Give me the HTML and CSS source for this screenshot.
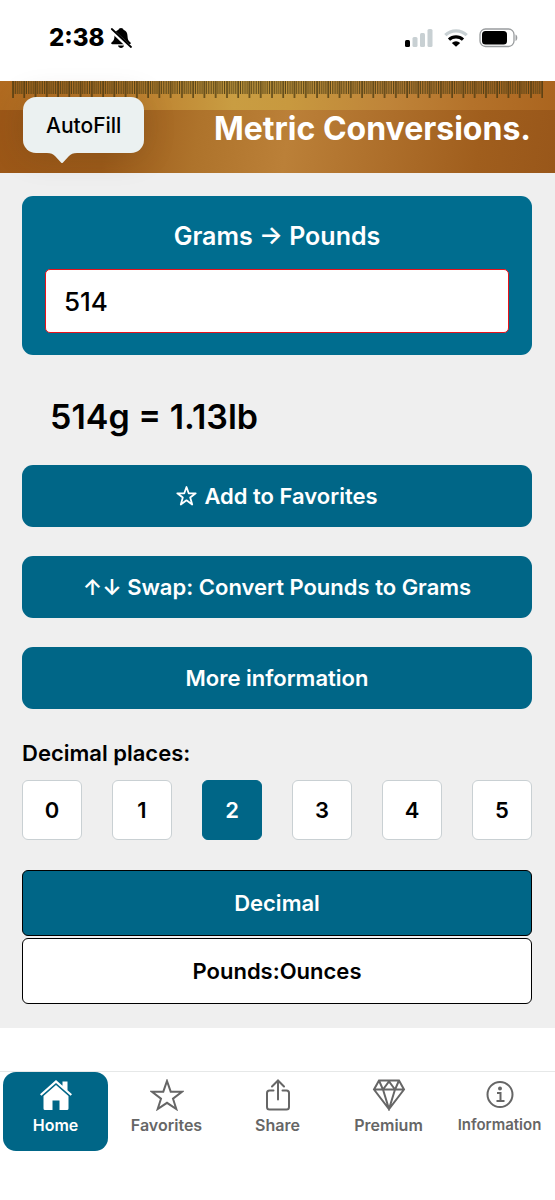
FILE: index.html
```
<!DOCTYPE html>
<html lang="en">
<head>
<meta charset="utf-8">
<meta name="viewport" content="width=device-width, initial-scale=1">
<title>Metric Conversions</title>
<link rel="stylesheet" href="styles.css">
</head>
<body>
<div class="status">
  <div class="status-group">
    <span class="clock">2:38</span>
    <svg class="bell" width="22" height="22" viewBox="0 0 22 22" aria-hidden="true">
      <path d="M11 1c-1.300 0-2.300.8-2.500 1.800C5.800 3.800 4.600 6 4.500 9c-.1 3.500-1 4.800-2.800 6.300-.9.900-.6 2 .7 2h17.200c1.300 0 1.600-1.100.7-2-1.800-1.500-2.700-2.800-2.800-6.300-.1-3-1.300-5.200-4-6.200C13.300 1.800 12.300 1 11 1Z"/>
      <path d="M8 18.500h6c-.3 1.600-1.500 2.500-3 2.500s-2.700-.9-3-2.500Z"/>
      <path d="M1 2.800 20.200 21" stroke="#fff" stroke-width="4"/>
      <path d="M1.800 2 21 20" stroke="#000" stroke-width="1.800" stroke-linecap="round"/>
    </svg>
  </div>
  <div class="status-group status-icons">
    <svg width="28" height="18" viewBox="0 0 28 18" aria-hidden="true">
      <rect x="0" y="11" width="5" height="7" rx="1.500"/>
      <g fill="#c8d0d3"><rect x="7.500" y="8" width="5" height="10" rx="1.500"/><rect x="15" y="4" width="5" height="14" rx="1.500"/><rect x="22.500" y="0" width="5" height="18" rx="1.500"/></g>
    </svg>
    <svg width="24" height="18" viewBox="0 0 24 18" fill="none" stroke-width="3.200" aria-hidden="true">
      <path d="M1.300 6.200a15.500 15.500 0 0 1 21.400 0" stroke="#c8d0d3"/>
      <path d="M5 10.600a10.200 10.200 0 0 1 14 0" stroke="#000"/>
      <path d="M12 17.800 7.800 14a6.200 6.200 0 0 1 8.400 0Z" fill="#000" stroke="none"/>
    </svg>
    <svg width="39" height="20" viewBox="0 0 39 20" aria-hidden="true">
      <rect x="1" y="1" width="34" height="17.500" rx="5.500" fill="none" stroke="#999c9e" stroke-width="1.300"/>
      <rect x="3" y="3" width="25" height="13.500" rx="3.500"/>
      <path d="M36.500 6.500c2.400 1 2.400 5.500 0 6.500Z" fill="#999c9e"/>
    </svg>
  </div>
</div>

<header class="banner">
  <svg class="ruler" width="100%" height="17" aria-hidden="true">
    <defs>
      <pattern id="ticks" width="11.260" height="17" patternUnits="userSpaceOnUse">
        <path d="M1 0v17" stroke="#43350f" stroke-width="1.300"/>
        <path d="M3.200 0v13M5.450 0v13M7.700 0v13M9.950 0v13" stroke="#4f3f14" stroke-width="1"/>
      </pattern>
    </defs>
    <rect width="100%" height="17" fill="url(#ticks)"/>
  </svg>
  <h1 class="brand">Metric Conversions.</h1>
  <button class="autofill" type="button">AutoFill
    <svg class="pointer" width="30" height="12" viewBox="0 0 30 12" aria-hidden="true"><path d="M0 0h30c-4 0-6 1-8 3l-6 6.500q-1 1-2 0L8 3C6 1 4 0 0 0Z"/></svg>
  </button>
</header>

<main class="content">
  <section class="panel">
    <label class="panel-title" for="amount">Grams → Pounds</label>
    <input class="amount" id="amount" type="text" inputmode="decimal" value="514">
  </section>
  <h2 class="result">514g = 1.13lb</h2>
  <div class="actions">
    <button class="action" type="button">
      <svg width="21" height="20" viewBox="0 0 21 20" fill="none" stroke="#fff" stroke-width="1.800" stroke-linejoin="round" aria-hidden="true"><path d="m10.500 1 2.200 6.300h7l-5.500 4.200 2 7-5.700-4.200-5.700 4.200 2-7-5.500-4.200h7Z"/></svg>
      Add to Favorites
    </button>
    <button class="action" type="button">↑↓ Swap: Convert Pounds to Grams</button>
    <button class="action" type="button">More information</button>
  </div>
  <h3 class="places-title" id="places">Decimal places:</h3>
  <div class="places" role="group" aria-labelledby="places">
    <button class="place" type="button">0</button>
    <button class="place" type="button">1</button>
    <button class="place selected" type="button" aria-pressed="true">2</button>
    <button class="place" type="button">3</button>
    <button class="place" type="button">4</button>
    <button class="place" type="button">5</button>
  </div>
  <div class="formats">
    <button class="format selected" type="button" aria-pressed="true">Decimal</button>
    <button class="format" type="button">Pounds:Ounces</button>
  </div>
</main>

<nav class="tabs">
  <a class="tab active" href="#home" aria-current="page">
    <svg width="34" height="32" viewBox="0 0 34 32" aria-hidden="true">
      <path d="M17 1 1 15.200l1.400 1.500L17 4l14.600 12.700 1.400-1.500-4.500-4V2.500h-5v4.200Z" fill="#fff"/>
      <path d="M17 6 4.500 17v12.500q0 1.500 1.500 1.500h7.500v-9.500h7V31H28q1.500 0 1.500-1.500V17Z" fill="#fff"/>
    </svg>
    Home
  </a>
  <a class="tab" href="#favorites">
    <svg width="34" height="32" viewBox="0 0 34 32" aria-hidden="true"><path d="m17 2 3.700 10.700H32l-9 7L26.300 30 17 23.800 7.700 30 11 19.700l-9-7h11.300Z"/></svg>
    Favorites
  </a>
  <a class="tab" href="#share">
    <svg width="34" height="32" viewBox="0 0 34 32" aria-hidden="true"><path d="M17 20.500V1.500M11 7.500l6-6 6 6M12.500 11.500h-4q-2.500 0-2.500 2.500v14q0 2.500 2.500 2.500h17q2.500 0 2.500-2.500V14q0-2.500-2.500-2.500h-4" stroke-linecap="round"/></svg>
    Share
  </a>
  <a class="tab" href="#premium">
    <svg width="34" height="32" viewBox="0 0 34 32" aria-hidden="true"><path d="M7 1.500h20l5 9L17 30 2 10.500ZM2 10.500h30M7 1.500l4 9L17 30l6-19.500 4-9M11 10.500l6-8 6 8"/></svg>
    Premium
  </a>
  <a class="tab tab-small" href="#information">
    <svg width="34" height="32" viewBox="0 0 34 32" aria-hidden="true"><circle cx="17" cy="15.500" r="12.500"/><circle cx="17" cy="9.500" r="2" fill="#666" stroke="none"/><path d="M14 14h3.500v8M13.500 22h8"/></svg>
    Information
  </a>
</nav>
</body>
</html>
```
FILE: styles.css
```
* {
  box-sizing: border-box;
}

body {
  margin: 0;
  background: #fff;
  color: #000;
  font-family: Inter, "Liberation Sans", sans-serif;
}

button,
input {
  margin: 0;
  font: inherit;
  color: inherit;
}

.status {
  display: flex;
  justify-content: space-between;
  align-items: center;
  padding: 21px 37px 26px 49px;
}

.status-group {
  display: flex;
  align-items: center;
  gap: 6px;
}

.status-icons {
  gap: 11px;
}

.clock {
  font-size: 24px;
  line-height: 34px;
  font-weight: 800;
}

.banner {
  position: relative;
  padding-bottom: 22px;
  background:
    linear-gradient(90deg, #b06a20 0%, #ba7b2b 22%, #c99d42 42%, #c8993f 52%, #bf8439 70%, #b4722a 85%, #ab651f 100%) top / 100% 29px no-repeat,
    linear-gradient(98deg, #9c5717 0%, #9b5a19 20%, #ae732b 36%, #bb8038 52%, #ad6e2a 70%, #a05e1d 86%, #99571a 100%);
}

.ruler {
  display: block;
  padding: 0 12px;
}

.brand {
  margin: 0;
  padding: 9px 24px 0 0;
  color: #fff;
  font-size: 32px;
  line-height: 44px;
  font-weight: 700;
  text-align: right;
}

.autofill {
  position: absolute;
  top: 16px;
  left: 23px;
  padding: 15px 23px 13px;
  border: 0;
  border-radius: 13px;
  background: #ebf1f1;
  box-shadow: 0 2px 32px rgba(60, 50, 30, 0.18);
  font-size: 21px;
  line-height: 28px;
  font-weight: 500;
}

.pointer {
  position: absolute;
  top: 100%;
  left: 24px;
  fill: #ebf1f1;
}

.content {
  padding: 23px 23px 24px 22px;
  background: #efefef;
}

.panel {
  padding: 24px 23px 22px;
  border-radius: 11px;
  background: #006d8f;
}

.panel-title {
  display: block;
  margin-bottom: 17px;
  color: #fff;
  font-size: 25px;
  line-height: 32px;
  font-weight: 600;
  text-align: center;
}

.amount {
  display: block;
  width: 100%;
  padding: 15px 18px;
  border: 1px solid #e8131b;
  border-radius: 5px;
  background: #fff;
  font-size: 26px;
  line-height: 32px;
  height: 64px;
  font-weight: 500;
}

.result {
  margin: 41px 28px 28px;
  font-size: 34px;
  line-height: 41px;
  font-weight: 600;
}

.actions {
  display: grid;
  gap: 29px;
}

.action {
  display: flex;
  justify-content: center;
  align-items: center;
  gap: 7px;
  padding: 15px;
  border: 0;
  border-radius: 11px;
  background: #006687;
  color: #fff;
  font-size: 22px;
  line-height: 32px;
  font-weight: 600;
}

.places-title {
  margin: 29px 0 12px;
  font-size: 22px;
  line-height: 30px;
  font-weight: 600;
}

.places {
  display: flex;
  justify-content: space-between;
}

.place {
  width: 60px;
  height: 60px;
  padding: 0;
  border: 1px solid #c9d0d3;
  border-radius: 6px;
  background: #fff;
  font-size: 22px;
  font-weight: 600;
}

.formats {
  display: grid;
  gap: 2px;
  margin-top: 30px;
}

.format {
  padding: 16px;
  border: 1px solid #000;
  border-radius: 6px;
  background: #fff;
  font-size: 22px;
  line-height: 32px;
  font-weight: 600;
}

.selected {
  background: #006687;
  color: #fff;
}

.place.selected {
  border-color: #006687;
}

.tabs {
  display: grid;
  grid-template-columns: repeat(5, 1fr);
  margin-top: 43px;
  border-top: 1px solid #e6e8e8;
}

.tab {
  display: flex;
  flex-direction: column;
  align-items: center;
  gap: 5px;
  margin: 0 3px;
  padding: 7px 0 17px;
  border-radius: 13px;
  color: #666;
  fill: none;
  stroke: #666;
  stroke-width: 2;
  font-size: 16px;
  line-height: 18px;
  font-weight: 600;
  text-decoration: none;
}

.tab.active {
  background: #006687;
  color: #fff;
  stroke: none;
}

.tab-small {
  font-size: 15px;
}
```
